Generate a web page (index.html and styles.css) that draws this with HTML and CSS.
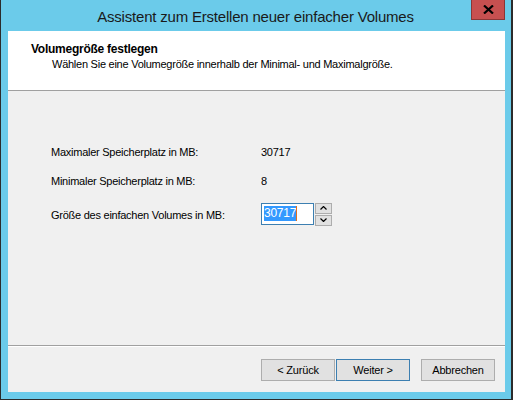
FILE: index.html
```html
<!DOCTYPE html>
<html lang="de">
<head>
    <meta charset="UTF-8">
    <title>Assistent zum Erstellen neuer einfacher Volumes</title>
    <link rel="stylesheet" href="styles.css">
</head>
<body>
    <div class="window">
        <div class="titlebar">
            <span></span>
            <div class="title">Assistent zum Erstellen neuer einfacher Volumes</div>
            <div class="close-btn">
                <svg width="11" height="9" viewBox="0 0 11 9">
                    <path d="M1 0.5 L10 8.5 M10 0.5 L1 8.5" stroke="#000" stroke-width="2.2" fill="none"/>
                </svg>
            </div>
        </div>

        <div class="client">
            <div class="header">
                <div class="header-title">Volumegröße festlegen</div>
                <div class="header-sub">Wählen Sie eine Volumegröße innerhalb der Minimal- und Maximalgröße.</div>
            </div>

            <div class="main">
                <div class="form">
                    <div class="label">Maximaler Speicherplatz in MB:</div>
                    <div class="value">30717</div>

                    <div class="label">Minimaler Speicherplatz in MB:</div>
                    <div class="value">8</div>

                    <div class="label label-spin">Größe des einfachen Volumes in MB:</div>
                    <div class="spinner">
                        <div class="spin-input"><span class="selected">30717</span><span class="caret"></span></div>
                        <div class="spin-buttons">
                            <div class="spin-btn">
                                <svg width="7" height="4" viewBox="0 0 7 4"><path d="M0.5 3.5 L3.5 0.5 L6.5 3.5" stroke="#000" stroke-width="1.2" fill="none"/></svg>
                            </div>
                            <div class="spin-btn">
                                <svg width="7" height="4" viewBox="0 0 7 4"><path d="M0.5 0.5 L3.5 3.5 L6.5 0.5" stroke="#000" stroke-width="1.2" fill="none"/></svg>
                            </div>
                        </div>
                    </div>
                </div>
            </div>

            <div class="footer">
                <button class="btn">&lt; Zurück</button>
                <button class="btn btn-default">Weiter &gt;</button>
                <button class="btn btn-cancel">Abbrechen</button>
            </div>
        </div>
    </div>
</body>
</html>
```

FILE: styles.css
```css
body {
    margin: 0;
    padding: 0;
    font-family: 'Liberation Sans', Arial, sans-serif;
    font-size: 11px;
    letter-spacing: -0.25px;
    color: #000;
}

.window {
    width: 513px;
    height: 400px;
    box-sizing: border-box;
    background-color: #6bcbea;
    border-left: 1px solid #2b2b2b;
    border-right: 2px solid #2b2b2b;
    border-bottom: 1px solid #2b2b2b;
    display: flex;
    flex-direction: column;
}

.titlebar {
    height: 31px;
    display: grid;
    grid-template-columns: 39px 1fr 40px;
    align-items: start;
}

.title {
    text-align: center;
    font-size: 15px;
    letter-spacing: -0.2px;
    line-height: 15px;
    padding-top: 9px;
    color: #1a1a1a;
}

.close-btn {
    width: 32px;
    height: 19px;
    background-color: #c75050;
    border: 1px solid #8a3737;
    border-top: none;
    display: flex;
    align-items: center;
    justify-content: center;
}

.client {
    flex: 1;
    margin: 0 6px 7px 7px;
    background-color: #f0f0f0;
    display: flex;
    flex-direction: column;
}

.header {
    height: 59px;
    background-color: #fff;
    border-bottom: 1px solid #a0a0a0;
    box-sizing: content-box;
    padding-left: 23px;
}

.header-title {
    font-weight: bold;
    font-size: 12px;
    margin-top: 11px;
    line-height: 15px;
}

.header-sub {
    padding-left: 21px;
    line-height: 15px;
}

.main {
    flex: 1;
    border-bottom: 1px solid #a0a0a0;
    box-shadow: 0 1px 0 #fff;
    padding: 46px 0 0 43px;
}

.form {
    display: grid;
    grid-template-columns: 210px auto;
    grid-auto-rows: 29px;
    align-items: center;
}

.label-spin {
    margin-top: 11px;
}

.spinner {
    margin-top: 9px;
    display: flex;
    align-items: flex-start;
}

.spin-input {
    width: 53px;
    height: 22px;
    border: 1px solid #3c7fb1;
    background-color: #fff;
    display: flex;
    align-items: center;
    padding-left: 2px;
    box-sizing: border-box;
    font-size: 12px;
}

.selected {
    background-color: #3399ff;
    color: #fff;
    line-height: 15px;
}

.caret {
    width: 1px;
    height: 15px;
    background-color: #e07020;
}

.spin-buttons {
    display: flex;
    flex-direction: column;
    margin-left: 1px;
}

.spin-btn {
    width: 15px;
    height: 9px;
    border: 1px solid #adadad;
    background-color: #e1e1e1;
    display: flex;
    align-items: center;
    justify-content: center;
}

.spin-btn + .spin-btn {
    margin-top: 1px;
}

.footer {
    height: 46px;
    display: flex;
    justify-content: flex-end;
    align-items: flex-start;
    padding: 13px 10px 0 0;
    box-sizing: border-box;
}

.btn {
    width: 74px;
    height: 22px;
    margin: 0;
    padding: 0;
    border: 1px solid #adadad;
    background-color: #e1e1e1;
    font-family: inherit;
    font-size: 11px;
    letter-spacing: -0.2px;
    color: #000;
}

.btn-default {
    border-color: #3c7fb1;
    margin-left: 1px;
}

.btn-cancel {
    margin-left: 11px;
}
```
